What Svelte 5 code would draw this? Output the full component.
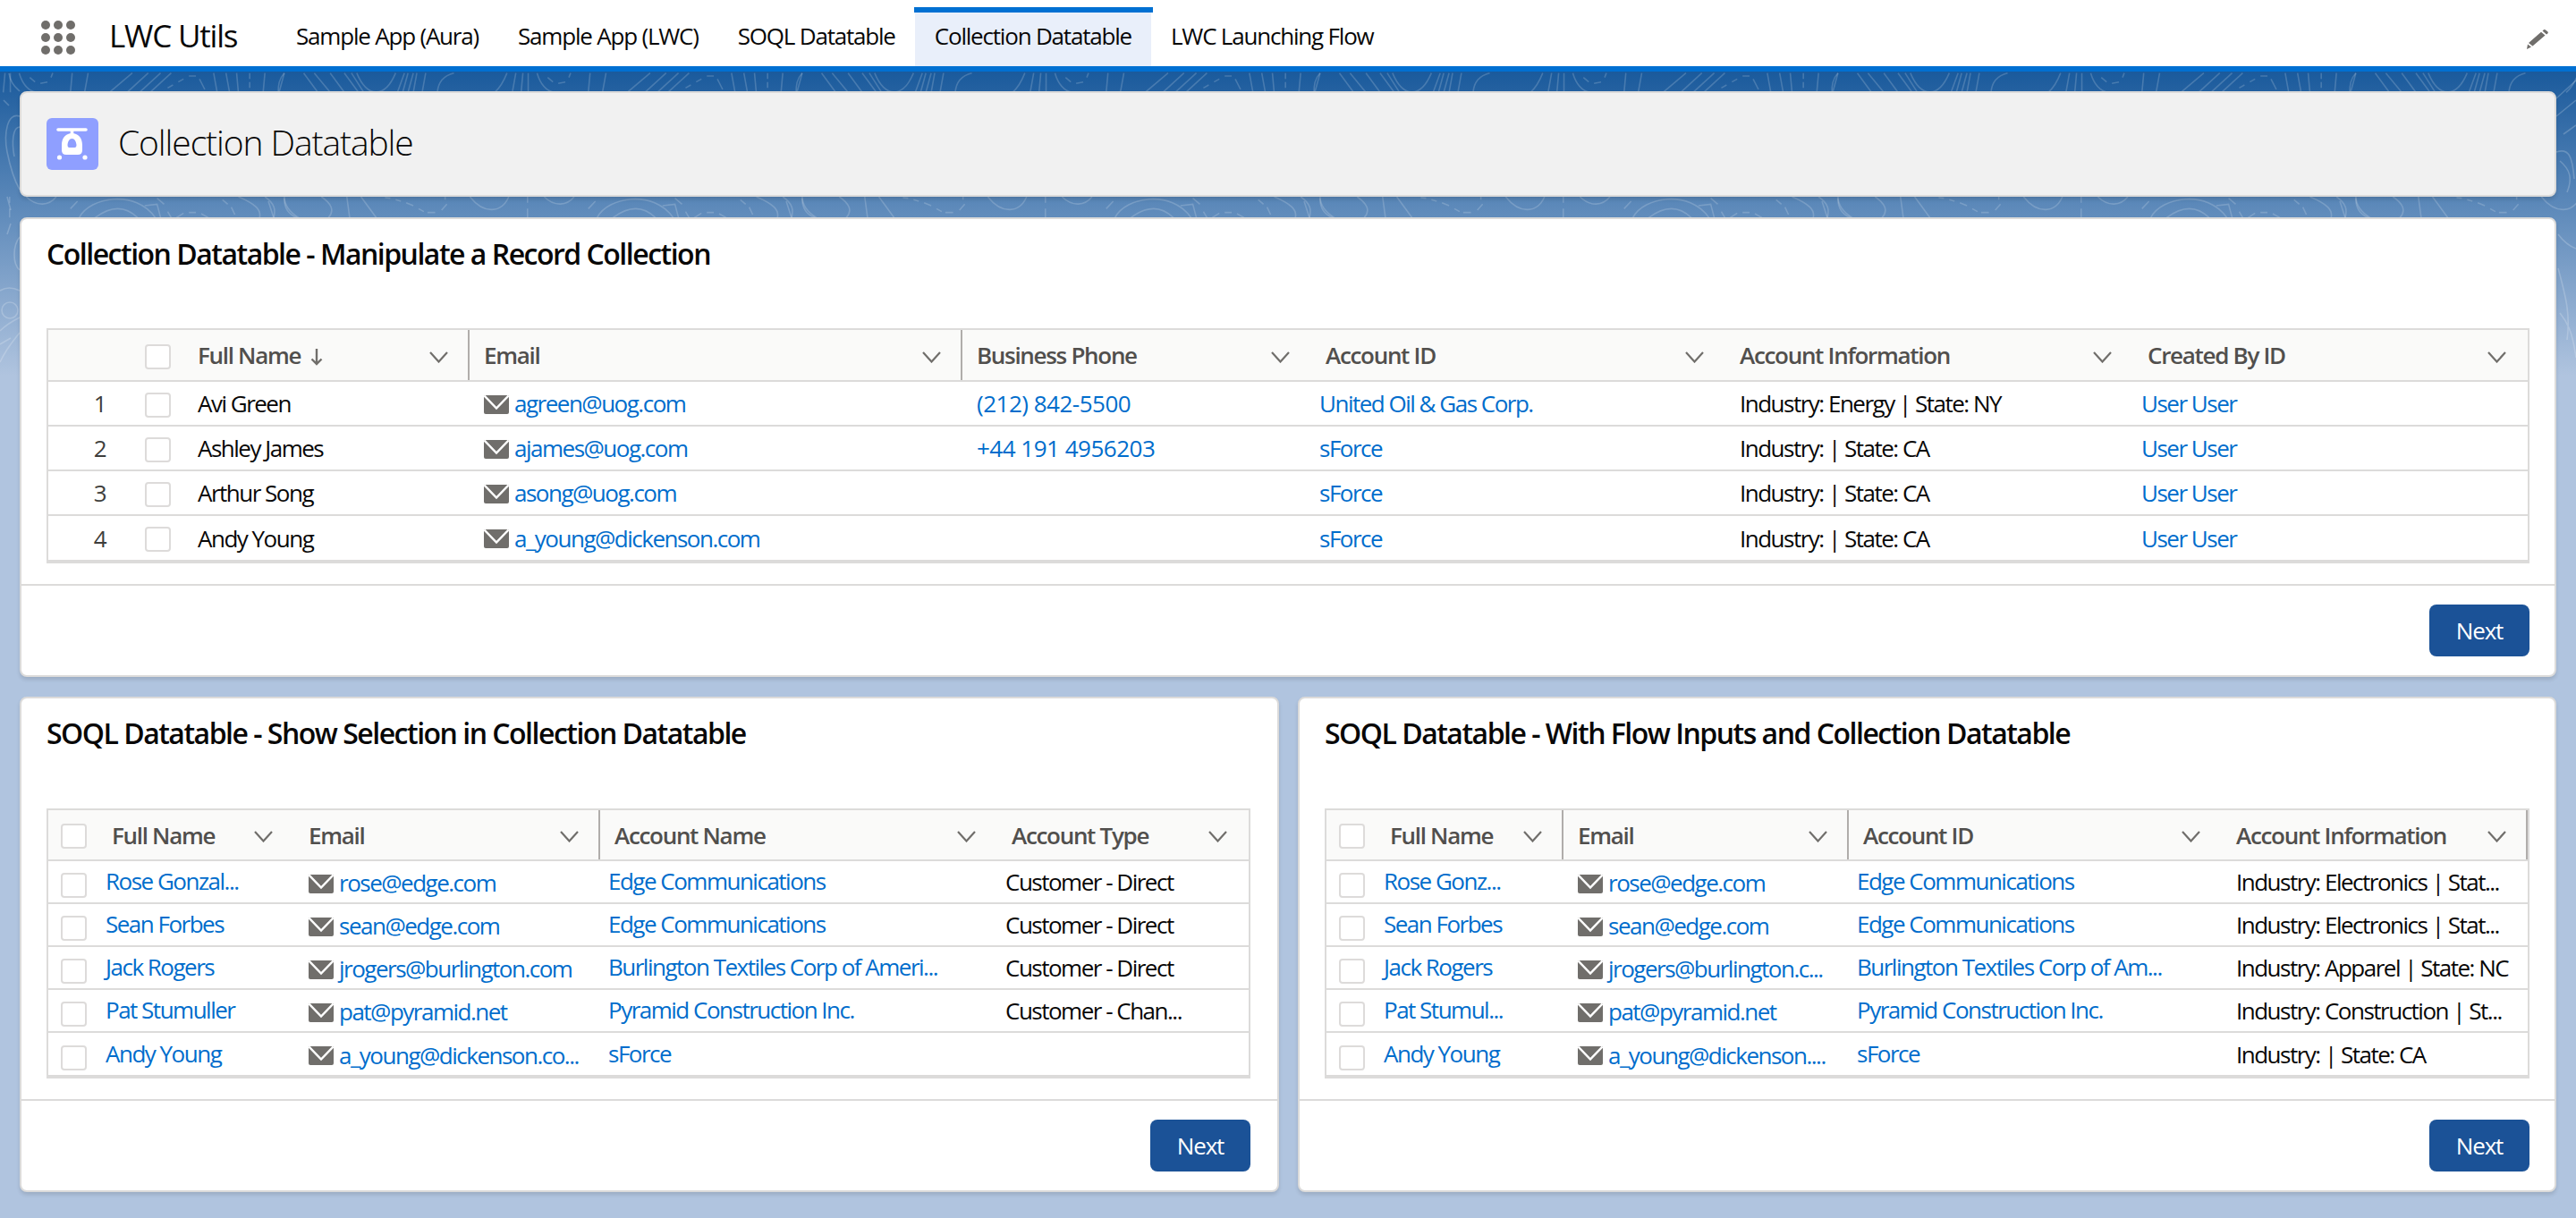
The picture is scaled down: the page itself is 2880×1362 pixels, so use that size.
<script>
  const tabs = ['Sample App (Aura)', 'Sample App (LWC)', 'SOQL Datatable', 'Collection Datatable', 'LWC Launching Flow'];
  const tiles = [-579, 0, 579, 1158, 1737, 2316];
  const u = 'User User';

  const t1 = {
    title: 'Collection Datatable - Manipulate a Record Collection',
    cls: 'top', rowH: 50,
    cols: [
      { w: 96, kind: 'num' }, { w: 55, kind: 'cb' },
      { w: 320, label: 'Full Name', kind: 'text', sort: true, rule: true },
      { w: 551, label: 'Email', kind: 'mail', rule: true },
      { w: 390, label: 'Business Phone', kind: 'phone' },
      { w: 463, label: 'Account ID', kind: 'link' },
      { w: 456, label: 'Account Information', kind: 'text' },
      { w: 441, label: 'Created By ID', kind: 'link' }
    ],
    rows: [
      ['1', '', 'Avi Green', 'agreen@uog.com', '(212) 842-5500', 'United Oil & Gas Corp.', 'Industry: Energy | State: NY', u],
      ['2', '', 'Ashley James', 'ajames@uog.com', '+44 191 4956203', 'sForce', 'Industry: | State: CA', u],
      ['3', '', 'Arthur Song', 'asong@uog.com', '', 'sForce', 'Industry: | State: CA', u],
      ['4', '', 'Andy Young', 'a_young@dickenson.com', '', 'sForce', 'Industry: | State: CA', u]
    ]
  };
  const t2 = {
    title: 'SOQL Datatable - Show Selection in Collection Datatable',
    cls: 'low left', rowH: 48,
    cols: [
      { w: 55, kind: 'cb' },
      { w: 220, label: 'Full Name', kind: 'link' },
      { w: 342, label: 'Email', kind: 'mail', rule: true },
      { w: 444, label: 'Account Name', kind: 'link' },
      { w: 281, label: 'Account Type', kind: 'type' }
    ],
    rows: [
      ['', 'Rose Gonzal...', 'rose@edge.com', 'Edge Communications', 'Customer - Direct'],
      ['', 'Sean Forbes', 'sean@edge.com', 'Edge Communications', 'Customer - Direct'],
      ['', 'Jack Rogers', 'jrogers@burlington.com', 'Burlington Textiles Corp of Ameri...', 'Customer - Direct'],
      ['', 'Pat Stumuller', 'pat@pyramid.net', 'Pyramid Construction Inc.', 'Customer - Chan...'],
      ['', 'Andy Young', 'a_young@dickenson.co...', 'sForce', '']
    ]
  };
  const t3 = {
    title: 'SOQL Datatable - With Flow Inputs and Collection Datatable',
    cls: 'low', rowH: 48,
    cols: [
      { w: 55, kind: 'cb' },
      { w: 210, label: 'Full Name', kind: 'link', rule: true },
      { w: 319, label: 'Email', kind: 'mail', rule: true },
      { w: 417, label: 'Account ID', kind: 'link' },
      { w: 342, label: 'Account Information', kind: 'text', rule: true }
    ],
    rows: [
      ['', 'Rose Gonz...', 'rose@edge.com', 'Edge Communications', 'Industry: Electronics | Stat...'],
      ['', 'Sean Forbes', 'sean@edge.com', 'Edge Communications', 'Industry: Electronics | Stat...'],
      ['', 'Jack Rogers', 'jrogers@burlington.c...', 'Burlington Textiles Corp of Am...', 'Industry: Apparel | State: NC'],
      ['', 'Pat Stumul...', 'pat@pyramid.net', 'Pyramid Construction Inc.', 'Industry: Construction | St...'],
      ['', 'Andy Young', 'a_young@dickenson....', 'sForce', 'Industry: | State: CA']
    ]
  };
</script>

{#snippet chevron()}
  <svg class="chev" viewBox="0 0 21 13" width="21" height="13"><path d="M1 1 L10.5 11.5 L20 1" fill="none" stroke="#706e6b" stroke-width="2.2"/></svg>
{/snippet}

{#snippet mail()}
  <svg class="mailico" viewBox="0 0 28 21" width="28" height="21"><rect width="28" height="21" rx="2" fill="#706e6b"/><path d="M0.5 0.5 L14 14.5 L27.5 0.5" fill="none" stroke="#fff" stroke-width="2.4"/></svg>
{/snippet}

{#snippet card(t)}
  <section class="card {t.cls}">
    <h2>{t.title}</h2>
    <div class="tablewrap">
      <table>
        <colgroup>
          {#each t.cols as c}<col style="width:{c.w}px" />{/each}
        </colgroup>
        <thead>
          <tr>
            {#each t.cols as c}
              <th class:rule={c.rule} class="h-{c.kind}">
                {#if c.kind === 'cb'}
                  <span class="cb"></span>
                {:else if c.label}
                  <div class="hd">
                    <span class="lbl">{c.label}</span>
                    {#if c.sort}
                      <svg class="sort" viewBox="0 0 14 20" width="14" height="20"><path d="M7 1 V18 M1.5 12.5 L7 18 L12.5 12.5" fill="none" stroke="#706e6b" stroke-width="2.4"/></svg>
                    {/if}
                    {@render chevron()}
                  </div>
                {/if}
              </th>
            {/each}
          </tr>
        </thead>
        <tbody>
          {#each t.rows as r}
            <tr style="height:{t.rowH}px">
              {#each t.cols as c, i}
                <td class="c-{c.kind}">
                  {#if c.kind === 'cb'}
                    <span class="cb"></span>
                  {:else if c.kind === 'mail'}
                    <div class="mailcell">{@render mail()}<a href="#top">{r[i]}</a></div>
                  {:else if c.kind === 'link' || c.kind === 'phone'}
                    <div class="line"><a href="#top">{r[i]}</a></div>
                  {:else}
                    <div class="line">{r[i]}</div>
                  {/if}
                </td>
              {/each}
            </tr>
          {/each}
        </tbody>
      </table>
    </div>
    <footer><button>Next</button></footer>
  </section>
{/snippet}

<div class="page">
  <svg class="texture" width="2880" height="420" viewBox="0 0 2880 420" aria-hidden="true">
    <defs>
      <g id="tile" fill="none" stroke="#fff" stroke-opacity=".18" stroke-width="1.6">
        <g transform="translate(300 70) scale(.3953 .3333)">
          <path vector-effect="non-scaling-stroke" d="M45 35C30 55 28 75 28 100M100 35L140 100M130 35L175 100M175 35L215 100M215 35L255 100M235 35L270 100M250 35C280 120 330 120 360 35M385 35L365 100M395 35L380 100M410 35L395 100M420 35L410 100M445 35L435 100M525 35C490 45 480 70 478 100M675 35C665 65 655 85 640 100M690 100L700 35M715 100L720 35M735 35V100M760 35C770 75 785 95 810 100M790 50L805 65M820 70L840 65M855 35L850 50M905 100L910 35M945 100L955 35M1015 100L1080 35M1065 100L1125 35M1100 100L1160 35M1130 100L1190 35M1180 85L1195 75M1210 65L1225 55M1240 45L1260 45M1270 55L1285 90M1320 100L1310 35M1355 100L1345 35M1380 100L1375 35M1412 85V65M1412 55V35M1450 100L1455 35M1495 100L1510 35"/>
        </g>
        <g transform="translate(300 215) scale(.3953 .3333)">
          <path vector-effect="non-scaling-stroke" d="M15 85L0 30M45 20C45 55 60 75 80 85M150 15C175 35 190 60 170 85M222 15L230 85M262 15L305 85M330 18L345 20M360 25L375 30M390 35L410 45M425 55L440 65M450 68L472 68M490 60L505 40M500 25V15M570 15C610 75 660 70 680 15M733 15V35M733 55V85M780 15C810 50 845 45 865 15M905 55L925 30M930 85C960 15 1090 -10 1145 85M975 85C1020 45 1060 45 1095 85M1115 45L1150 40L1160 85M1150 20L1170 40M1180 65L1190 85M1205 85L1225 70M1240 68L1260 68M1275 72L1295 85M1335 25L1350 40M1360 50L1370 75M1380 15C1430 40 1445 60 1440 85M1455 15C1485 40 1485 60 1480 85M1510 15C1510 50 1530 70 1550 85"/>
        </g>
      </g>
    </defs>
    {#each tiles as x}
      <use href="#tile" x={x} y="0" />
    {/each}
    <g fill="none" stroke="#fff" stroke-opacity=".2" stroke-width="1.6">
      <path d="M22 130C8 125 4 150 8 170C12 190 18 205 22 212M22 142C14 142 13 160 16 175M10 82C12 95 20 100 22 102M4 112L10 118"/>
      <path d="M8 220L12 235M12 250L8 262M22 265C14 275 14 295 22 302"/>
      <circle cx="11" cy="347" r="9"/>
      <path d="M0 325C8 320 16 322 22 325M0 370C8 362 16 358 22 355M0 405C8 388 16 380 22 372M0 385L12 378"/>
      <path d="M2858 110L2880 90M2858 130L2880 112M2866 150L2880 140M2858 170C2872 165 2876 175 2878 200M2862 180C2874 190 2876 200 2870 215M2860 262C2866 270 2872 275 2880 278M2860 300C2868 330 2874 350 2870 380M2862 350C2870 360 2876 370 2880 400"/>
    </g>
  </svg>

  <nav>
    <div class="waffle" aria-hidden="true">
      {#each Array(9) as _}<i></i>{/each}
    </div>
    <div class="appname">LWC Utils</div>
    <ul>
      {#each tabs as tab, i}
        <li class:active={i === 3}>{tab}</li>
      {/each}
    </ul>
    <svg class="pencil" viewBox="0 0 24 22" width="24" height="22" aria-hidden="true">
      <path d="M0 22 L1 16.5 L5 19.5 Z M2 15 L16 2.8 L20.5 6.6 L6.5 18.5 Z M17.5 1.6 L19 0.2 Q20 -.3 21 .4 L23.5 2.6 Q24.2 3.6 23.3 4.6 L22 5.4 Z" fill="#706e6b"/>
    </svg>
  </nav>

  <main>
    <header class="pagehead">
      <div class="appicon">
        <svg viewBox="0 0 58 58" width="58" height="58">
          <path d="M13 13H44M28.5 13V18" stroke="#fff" stroke-width="3.6" stroke-linecap="round" fill="none"/>
          <path fill-rule="evenodd" fill="#fff" d="M28.5 17C35 17 40 22 40 30V36Q40 41 35 41H22Q17 41 17 36V30C17 22 22 17 28.5 17ZM28.5 23C25.5 23 24 26 23.5 30Q23.5 33 25.5 33H31.5Q33.5 33 33.5 30C33 26 31.5 23 28.5 23Z"/>
          <circle cx="14.5" cy="44" r="2.6" fill="#fff"/><circle cx="43" cy="44" r="2.6" fill="#fff"/>
        </svg>
      </div>
      <h1>Collection Datatable</h1>
    </header>

    {@render card(t1)}

    <div class="pair">
      {@render card(t2)}
      {@render card(t3)}
    </div>
  </main>
</div>

<style>
  :global(body) { margin: 0; background: #b0c4df; }
  .page {
    position: relative;
    width: 2880px;
    height: 1362px;
    overflow: hidden;
    font-family: "Open Sans", "Noto Sans", sans-serif;
    font-size: 26px;
    letter-spacing: -1.2px;
    color: #080707;
    background: linear-gradient(180deg, #1a5a9c 80px, #b0c4df 420px);
  }
  .texture { position: absolute; left: 0; top: 0; }

  nav {
    position: relative;
    height: 74px;
    border-bottom: 6px solid #0070d2;
    background: #fff;
    display: flex;
    align-items: stretch;
  }
  .waffle {
    display: grid;
    grid-template-columns: repeat(3, 10px);
    grid-auto-rows: 10px;
    gap: 4px;
    margin: 23px 0 0 46px;
    height: 38px;
  }
  .waffle i { border-radius: 50%; background: #706e6b; }
  .appname { font-size: 35px; margin-left: 38px; line-height: 80px; height: 74px; width: 187px; }
  ul { list-style: none; display: flex; margin: 0; padding: 0; }
  li { padding: 0 22px; line-height: 80px; }
  li.active { position: relative; background: #e9effa; margin-top: 14px; line-height: 52px; height: 60px; }
  li.active::before { content: ""; position: absolute; left: -1px; right: -2px; top: -6px; height: 6px; background: #0070d2; }
  .pencil { position: absolute; left: 2825px; top: 33px; }

  main { position: relative; padding: 22px 22px 0; display: flex; flex-direction: column; gap: 22px; }

  .pagehead {
    height: 118px;
    margin-bottom: 1px;
    box-sizing: border-box;
    background: #f1f1f1;
    border: 2px solid #dcdbda;
    border-radius: 8px;
    box-shadow: 0 3px 4px rgba(0,0,0,.12);
    display: flex;
    align-items: center;
    padding-left: 28px;
    gap: 22px;
  }
  .appicon { width: 58px; height: 58px; border-radius: 6px; background: #8f9fff; flex: none; }
  .appicon svg { display: block; }
  h1 { margin: 0; font-size: 39px; font-weight: 300; line-height: 1; position: relative; top: -3px; letter-spacing: -1.1px; }

  .card {
    background: #fff;
    border: 2px solid #dcdbda;
    border-radius: 8px;
    box-shadow: 0 3px 4px rgba(0,0,0,.12);
    padding: 0 28px;
    display: flex;
    flex-direction: column;
  }
  .card.left { padding-right: 30px; }
  h2 { margin: 0; height: 122px; box-sizing: border-box; padding-top: 19px; font-size: 32px; line-height: 40px; font-weight: 600; letter-spacing: -1.5px; color: #080707; }
  .low h2 { height: 123px; }
  .pair { display: grid; grid-template-columns: 1408px 1407px; gap: 21px; }

  .tablewrap { border: 2px solid #dcdbda; border-bottom-width: 4px; }
  table { border-collapse: collapse; table-layout: fixed; width: 100%; }
  th { height: 56px; padding: 0; background: #fafaf9; border-bottom: 2px solid #dcdbda; position: relative; font-weight: 600; color: #514f4d; text-align: left; letter-spacing: -1.3px; }
  .low th { height: 55px; }
  th.rule::after { content: ""; position: absolute; right: 0; top: 0; bottom: 0; width: 2px; background: #b0adab; }
  .hd { display: flex; align-items: center; padding: 0 24px 0 16px; height: 55px; }
  .lbl { white-space: nowrap; }
  .sort { margin-left: 11px; margin-top: 3px; }
  .chev { margin-left: auto; margin-top: 4px; flex: none; }
  td { padding: 0 0 0 16px; border-bottom: 2px solid #dcdbda; box-sizing: border-box; letter-spacing: -1.5px; }
  tbody tr:last-child td { border-bottom: 0; }
  a { color: #006dcc; text-decoration: none; }
  .line { white-space: nowrap; }
  .c-link, .c-type { padding-left: 9px; }
  .low .c-link .line { padding-bottom: 2px; }
  .c-phone { letter-spacing: -.5px; }
  .c-num { text-align: right; padding-right: 32px; color: #3e3e3c; }
  .c-cb, .h-cb { padding: 0; }
  .cb { display: block; box-sizing: border-box; width: 29px; height: 28px; background: #fff; border: 2px solid #dddbda; border-radius: 4px; margin: 3px 0 0 12px; }
  .low .c-cb .cb, .low .h-cb .cb { margin-left: 14px; }
  .low .c-cb .cb { margin-top: 8px; }
  .mailcell { display: flex; align-items: center; gap: 6px; white-space: nowrap; }
  .mailico { flex: none; margin-top: 2px; }
  .low .mailcell { padding-top: 2px; }

  footer { margin: 23px -28px 0; border-top: 2px solid #dcdbda; padding: 21px 28px; display: flex; justify-content: flex-end; }
  .left footer { margin-right: -30px; padding-right: 30px; }
  button { width: 112px; height: 58px; padding: 0; border: 0; border-radius: 8px; background: #1b5297; color: #fff; font: inherit; letter-spacing: inherit; }
</style>
